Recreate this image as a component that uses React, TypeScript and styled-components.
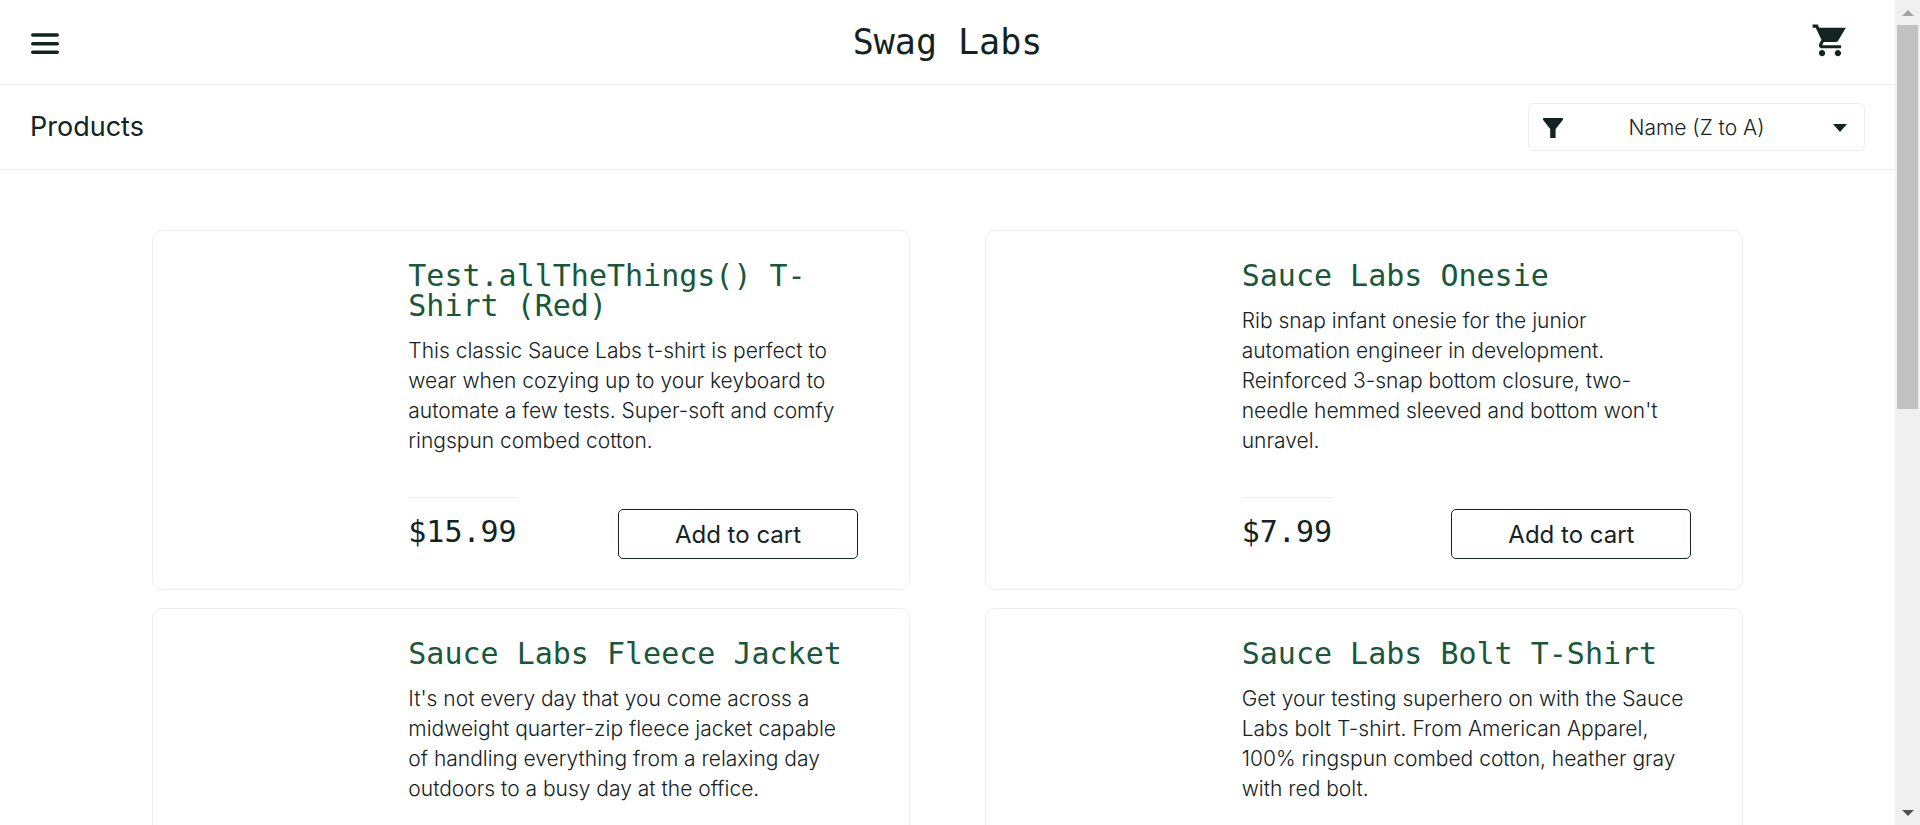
import React, { useState } from "react";
import styled, { createGlobalStyle } from "styled-components";

const ink = "#132322";
const green = "#18583a";
const line = "#ededed";
const sans = `Inter, "Liberation Sans", sans-serif`;
const mono = `"DejaVu Sans Mono", "Liberation Mono", monospace`;

const GlobalStyle = createGlobalStyle`
  *, *::before, *::after { box-sizing: border-box; }
  body {
    margin: 0;
    background: #fff;
    color: ${ink};
    font-family: ${sans};
  }
`;

const Shell = styled.div`
  display: flex;
  height: 100vh;
`;

const Page = styled.div`
  flex: 1;
  min-width: 0;
  overflow-y: auto;
  scrollbar-width: none;
`;

const Header = styled.header`
  display: grid;
  grid-template-columns: 1fr auto 1fr;
  align-items: center;
  height: 85px;
  padding: 0 30px;
  border-bottom: 1px solid ${line};
`;

const IconButton = styled.button<{ $end?: boolean }>`
  justify-self: ${(p) => (p.$end ? "end" : "start")};
  display: flex;
  padding: ${(p) => (p.$end ? "0 16px 0 0" : "0")};
  border: 0;
  background: none;
  color: inherit;
  cursor: pointer;
`;

const Brand = styled.div`
  font-family: ${mono};
  font-size: 35px;
  line-height: 40px;
`;

const SubHeader = styled.div`
  display: flex;
  align-items: center;
  justify-content: space-between;
  height: 85px;
  padding: 0 30px;
  border-bottom: 1px solid ${line};
`;

const Heading = styled.h1`
  margin: 0;
  font-size: 27px;
  font-weight: 400;
  line-height: 30px;
`;

const SortBox = styled.div`
  position: relative;
  width: 337px;
`;

const SortSelect = styled.select`
  display: block;
  width: 100%;
  height: 48px;
  padding: 0 45px;
  appearance: none;
  border: 1px solid ${line};
  border-radius: 6px;
  background: #fff;
  color: ${ink};
  font-family: ${sans};
  font-size: 21px;
  font-weight: 300;
  text-align: center;
  text-align-last: center;
`;

const SortIcons = styled.div`
  position: absolute;
  inset: 0;
  display: flex;
  align-items: center;
  justify-content: space-between;
  padding: 2px 18px 0 15px;
  pointer-events: none;
`;

const ProductGrid = styled.main`
  display: grid;
  grid-template-columns: 1fr 1fr;
  gap: 18px 75px;
  padding: 60px 8%;
`;

const Card = styled.article`
  display: grid;
  grid-template-columns: 32% 1fr;
  column-gap: 30px;
  min-height: 360px;
  padding: 30px 51px 30px 0;
  border: 1px solid ${line};
  border-radius: 10px;
`;

const CardBody = styled.div`
  display: flex;
  flex-direction: column;
  min-width: 0;
`;

const ProductLink = styled.a`
  color: ${green};
  text-decoration: none;
`;

const ProductName = styled.h2`
  margin: 0 0 15px;
  font-family: ${mono};
  font-size: 30px;
  font-weight: 400;
  line-height: 30px;
`;

const Description = styled.p`
  margin: 0;
  font-size: 21px;
  font-weight: 300;
  line-height: 30px;
`;

const PriceBar = styled.div`
  display: flex;
  justify-content: space-between;
  align-items: flex-end;
  margin-top: auto;
`;

const Price = styled.div`
  height: 62px;
  padding-top: 19px;
  border-top: 1px solid ${line};
  font-family: ${mono};
  font-size: 30px;
  line-height: 30px;
`;

const CartButton = styled.button`
  width: 240px;
  height: 50px;
  border: 1px solid ${ink};
  border-radius: 5px;
  background: #fff;
  color: ${ink};
  font-family: ${sans};
  font-size: 24px;
  cursor: pointer;
`;

const Scrollbar = styled.div`
  display: flex;
  flex-direction: column;
  align-items: center;
  width: 25px;
  background: #f0f0f0;
`;

const ScrollArrow = styled.span`
  display: flex;
  align-items: center;
  justify-content: center;
  height: 25px;
`;

const ScrollTrack = styled.div`
  flex: 1;
  width: 21px;
`;

const ScrollThumb = styled.div`
  height: 49.6%;
  background: #c1c1c1;
`;

const MenuIcon = () => (
  <svg width="30" height="24" viewBox="0 0 30 24" fill={ink} aria-hidden="true">
    <rect x="1" y="3.200" width="28" height="3.600" rx="1.800" />
    <rect x="1" y="12" width="28" height="3.600" rx="1.800" />
    <rect x="1" y="20.400" width="28" height="3.600" rx="1.800" />
  </svg>
);

const CartIcon = () => (
  <svg width="38" height="38" viewBox="0 1 24 24" fill={ink} aria-hidden="true">
    <path d="M7 18c-1.100 0-1.990.9-1.990 2S5.900 22 7 22s2-.9 2-2-.9-2-2-2zM1 2v2h2l3.600 7.590-1.350 2.450c-.16.28-.25.610-.25.960 0 1.100.9 2 2 2h12v-2H7.420c-.14 0-.25-.11-.25-.25l.03-.12.9-1.630h7.450c.75 0 1.410-.41 1.750-1.030L22 4H5.210l-.94-2H1zm16 16c-1.100 0-1.990.9-1.990 2s.89 2 1.990 2 2-.9 2-2-.9-2-2-2z" />
  </svg>
);

const FunnelIcon = () => (
  <svg width="20" height="20" viewBox="0 0 20 20" fill={ink} aria-hidden="true">
    <path d="M.8 0h18.400q.8 0 .8.800v1L12.600 11v9H7.200v-9L0 1.800v-1Q0 0 .8 0z" />
  </svg>
);

const CaretIcon = () => (
  <svg width="14" height="8" viewBox="0 0 14 8" fill={ink} aria-hidden="true">
    <path d="M0 0h14L7 8z" />
  </svg>
);

const Triangle = ({ up }: { up?: boolean }) => (
  <svg width="12" height="6" viewBox="0 0 12 6" aria-hidden="true">
    <path d={up ? "M6 0l6 6H0z" : "M0 0h12L6 6z"} fill={up ? "#a3a3a3" : "#505050"} />
  </svg>
);

type Product = { name: string; text: string; price?: string };

const products: Product[] = [
  {
    name: "Test.allTheThings() T-Shirt (Red)",
    text: "This classic Sauce Labs t-shirt is perfect to wear when cozying up to your keyboard to automate a few tests. Super-soft and comfy ringspun combed cotton.",
    price: "$15.99",
  },
  {
    name: "Sauce Labs Onesie",
    text: "Rib snap infant onesie for the junior automation engineer in development. Reinforced 3-snap bottom closure, two-needle hemmed sleeved and bottom won't unravel.",
    price: "$7.99",
  },
  {
    name: "Sauce Labs Fleece Jacket",
    text: "It's not every day that you come across a midweight quarter-zip fleece jacket capable of handling everything from a relaxing day outdoors to a busy day at the office.",
  },
  {
    name: "Sauce Labs Bolt T-Shirt",
    text: "Get your testing superhero on with the Sauce Labs bolt T-shirt. From American Apparel, 100% ringspun combed cotton, heather gray with red bolt.",
  },
];

export default function App() {
  const [sort, setSort] = useState("za");
  return (
    <Shell>
      <GlobalStyle />
      <Page>
        <Header>
          <IconButton type="button" aria-label="Open menu">
            <MenuIcon />
          </IconButton>
          <Brand>Swag Labs</Brand>
          <IconButton type="button" aria-label="Shopping cart" $end>
            <CartIcon />
          </IconButton>
        </Header>
        <SubHeader>
          <Heading>Products</Heading>
          <SortBox>
            <SortSelect aria-label="Sort products" value={sort} onChange={(e) => setSort(e.target.value)}>
              <option value="az">Name (A to Z)</option>
              <option value="za">Name (Z to A)</option>
              <option value="lohi">Price (low to high)</option>
              <option value="hilo">Price (high to low)</option>
            </SortSelect>
            <SortIcons>
              <FunnelIcon />
              <CaretIcon />
            </SortIcons>
          </SortBox>
        </SubHeader>
        <ProductGrid>
          {products.map((p) => (
            <Card key={p.name}>
              <div />
              <CardBody>
                <ProductName>
                  <ProductLink href="#">{p.name}</ProductLink>
                </ProductName>
                <Description>{p.text}</Description>
                {p.price && (
                  <PriceBar>
                    <Price>{p.price}</Price>
                    <CartButton type="button">Add to cart</CartButton>
                  </PriceBar>
                )}
              </CardBody>
            </Card>
          ))}
        </ProductGrid>
      </Page>
      <Scrollbar aria-hidden="true">
        <ScrollArrow>
          <Triangle up />
        </ScrollArrow>
        <ScrollTrack>
          <ScrollThumb />
        </ScrollTrack>
        <ScrollArrow>
          <Triangle />
        </ScrollArrow>
      </Scrollbar>
    </Shell>
  );
}
